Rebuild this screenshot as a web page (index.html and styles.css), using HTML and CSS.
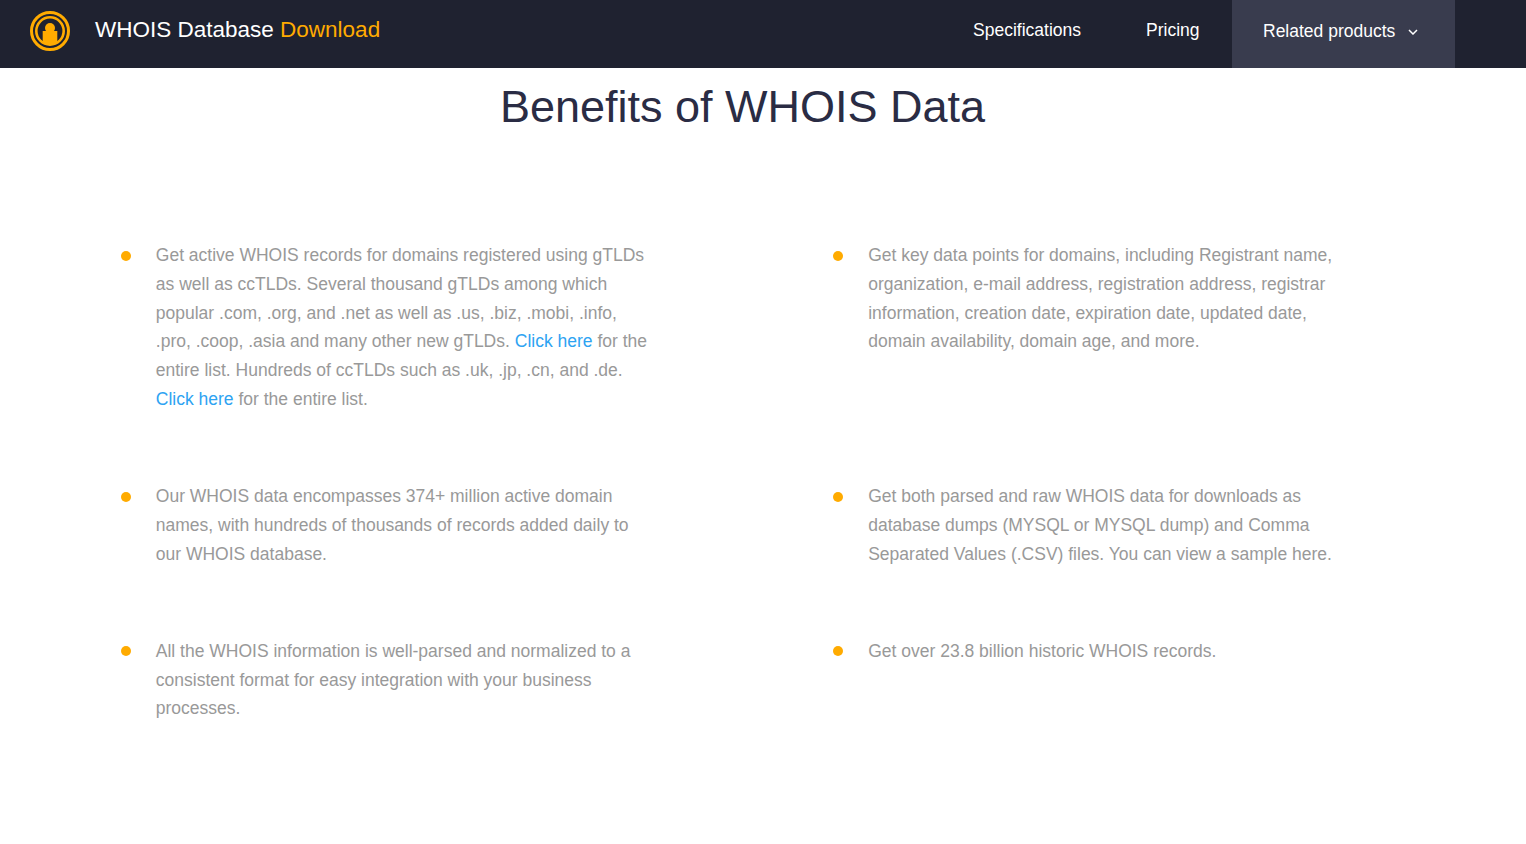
FILE: index.html
```html
<!DOCTYPE html>
<html lang="en">
<head>
<meta charset="utf-8">
<title>WHOIS Database Download</title>
<link rel="stylesheet" href="styles.css">
</head>
<body>
<header class="topbar">
  <a class="brand" href="#">
    <svg class="logo" width="40" height="40" viewBox="0 0 40 40" aria-hidden="true">
      <circle cx="20" cy="20" r="18.5" fill="none" stroke="#ffab00" stroke-width="3"/>
      <circle cx="20" cy="20" r="13.7" fill="none" stroke="#ffab00" stroke-width="2.6"/>
      <circle cx="20" cy="17" r="5" fill="#ffab00"/>
      <path d="M12.7 20h14.6v11.6A13.7 13.7 0 0 1 12.7 31.6z" fill="#ffab00"/>
    </svg>
    <span class="brand-name">WHOIS Database <span class="accent">Download</span></span>
  </a>
  <nav class="nav">
    <a class="nav-link" href="#">Specifications</a>
    <a class="nav-link" href="#">Pricing</a>
    <a class="nav-drop" href="#">Related products
      <svg class="chev" width="10" height="6" viewBox="0 0 10 6" aria-hidden="true"><path d="M1 1l4 4 4-4" fill="none" stroke="#fff" stroke-width="1.5"/></svg>
    </a>
  </nav>
</header>
<main class="benefits">
  <h1 class="title">Benefits of WHOIS Data</h1>
  <ul class="list">
    <li class="item">Get active WHOIS records for domains registered using gTLDs as well as ccTLDs. Several thousand gTLDs among which popular .com, .org, and .net as well as .us, .biz, .mobi, .info, .pro, .coop, .asia and many other new gTLDs. <a href="#">Click here</a> for the entire list. Hundreds of ccTLDs such as .uk, .jp, .cn, and .de. <a href="#">Click here</a> for the entire list.</li>
    <li class="item">Get key data points for domains, including Registrant name, organization, e-mail address, registration address, registrar information, creation date, expiration date, updated date, domain availability, domain age, and more.</li>
    <li class="item">Our WHOIS data encompasses 374+ million active domain names, with hundreds of thousands of records added daily to our WHOIS database.</li>
    <li class="item">Get both parsed and raw WHOIS data for downloads as database dumps (MYSQL or MYSQL dump) and Comma Separated Values (.CSV) files. You can view a sample here.</li>
    <li class="item">All the WHOIS information is well-parsed and normalized to a consistent format for easy integration with your business processes.</li>
    <li class="item">Get over 23.8 billion historic WHOIS records.</li>
  </ul>
</main>
</body>
</html>
```
FILE: styles.css
```css
* { box-sizing: border-box; }
html, body { margin: 0; padding: 0; }
body {
  background: #fff;
  font-family: "Liberation Sans", Arial, sans-serif;
  color: #2a2c44;
}
a { text-decoration: none; }
.topbar {
  display: flex;
  justify-content: space-between;
  align-items: stretch;
  height: 68px;
  padding: 0 71px 0 30px;
  background: #1f2230;
}
.brand {
  display: flex;
  align-items: center;
  gap: 25px;
  color: #fff;
  padding-bottom: 6px;
}
.logo { display: block; }
.brand-name { font-size: 22.5px; padding-bottom: 2px; }
.accent { color: #ffab00; }
.nav { display: flex; align-items: stretch; }
.nav-link {
  display: flex;
  align-items: center;
  padding: 0 32.5px 8px;
  color: #fff;
  font-size: 17.5px;
}
.nav-drop {
  display: flex;
  align-items: center;
  gap: 13px;
  width: 223px;
  padding: 0 0 6px 31px;
  background: #393c4e;
  color: #fff;
  font-size: 17.5px;
}
.chev { display: block; margin-top: 1px; }
.benefits { padding: 12px 0 0; }
.title {
  margin: 0 0 108px;
  padding-left: 1px;
  text-align: center;
  font-size: 45px;
  font-weight: 400;
  line-height: 53px;
  color: #2a2c44;
  width: 1484px;
}
.list {
  display: grid;
  grid-template-columns: 712.4px 1fr;
  row-gap: 68.28px;
  list-style: none;
  margin: 0;
  padding: 0 0 0 120.8px;
}
.item {
  position: relative;
  width: 530px;
  padding-left: 35px;
  font-size: 17.5px;
  line-height: 28.8px;
  color: #999;
}
.item::before {
  content: "";
  position: absolute;
  left: 0;
  top: 9.7px;
  width: 10px;
  height: 10px;
  border-radius: 50%;
  background: #ffab00;
}
.item a { color: #2ea3f2; }
```
